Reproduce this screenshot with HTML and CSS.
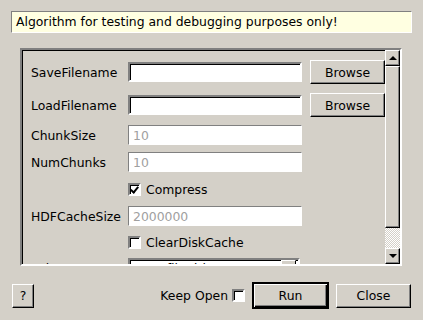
FILE: index.html
```html
<!DOCTYPE html>
<html>
<head>
  <meta charset="UTF-8">
  <title>Algorithm</title>
  <link rel="stylesheet" href="styles.css">
</head>
<body>
  <div class="note">Algorithm for testing and debugging purposes only!</div>

  <div class="panel">
    <div class="view">
      <div class="form">
        <label>SaveFilename</label><input class="field" value=""><button class="btn">Browse</button>
        <label>LoadFilename</label><input class="field" value=""><button class="btn">Browse</button>
        <label>ChunkSize</label><input class="field dim" value="10"><span></span>
        <label>NumChunks</label><input class="field dim" value="10"><span></span>
        <span></span><div class="opt"><span class="box on"></span>Compress</div>
        <label>HDFCacheSize</label><input class="field dim" value="2000000"><span></span>
        <span></span><div class="opt"><span class="box"></span>ClearDiskCache</div>
        <label>Driver</label><div class="combo"><span>sec2 file driver</span><span class="drop"></span></div><span></span>
      </div>
    </div>
    <div class="sbar">
      <div class="arrow up"></div>
      <div class="thumb"></div>
      <div class="trough"></div>
      <div class="arrow down"></div>
    </div>
  </div>

  <div class="bottom">
    <button class="btn help">?</button>
    <span class="grow"></span>
    <span class="keep">Keep Open</span><span class="box"></span>
    <button class="btn run">Run</button>
    <button class="btn">Close</button>
  </div>
</body>
</html>
```

FILE: styles.css
```css
body {margin:0;background:#d4d0c8;font-family:"DejaVu Sans",sans-serif;font-size:12.4px;color:#000;height:320px;overflow:hidden;}
.note {margin:11px 11px 0;height:20px;line-height:20px;padding:0 4px;background:#ffffe1;
  border:1px solid;border-color:#808080 #fff #fff #808080;}

.panel {display:flex;margin:15px 21px 0 20px;height:214px;border:2px solid;border-color:#808080 #fff #fff #808080;
  box-shadow:inset 1px 1px #000;}
.view {flex:1;overflow:hidden;padding:9px 0 0 9px;}
.form {display:grid;grid-template-columns:89px 174px 75px;column-gap:8px;row-gap:7px;
  grid-template-rows:26px 26px 20px 20px 20px 20px 18px 20px;align-items:center;}
.form label {white-space:nowrap;}
.field {box-sizing:border-box;height:20px;width:174px;margin:0;padding:0 3px;font:inherit;background:#fff;
  border:2px solid;border-color:#808080 #fff #fff #808080;box-shadow:inset 1px 1px #000;outline:none;}
.field.dim {color:#a0a0a0;border-width:1px;border-color:#808080 #fff #fff #808080;box-shadow:none;padding:0 4px;}
.opt {grid-column:2 / span 2;display:flex;align-items:center;gap:5px;}
.box {box-sizing:border-box;width:13px;height:13px;background:#fff;border:2px solid;
  border-color:#808080 #fff #fff #808080;box-shadow:inset 1px 1px #000;position:relative;}
.box.on::after {content:"";position:absolute;left:2px;top:0px;width:3px;height:6px;
  border:solid #000;border-width:0 2px 2px 0;transform:rotate(40deg);}
.combo {box-sizing:border-box;height:20px;width:172px;display:flex;align-items:center;justify-content:space-between;
  padding:0 2px 0 4px;background:#fff;border:2px solid;border-color:#808080 #fff #fff #808080;box-shadow:inset 1px 1px #000;}
.drop {width:13px;height:14px;background:#d4d0c8;border:1px solid;border-color:#fff #000 #000 #fff;}

.btn {box-sizing:border-box;height:24px;width:75px;margin:0;padding:0;font:inherit;color:#000;background:#d4d0c8;
  border:1px solid;border-color:#fff #000 #000 #fff;box-shadow:inset -1px -1px #808080;}

.sbar {width:15px;display:flex;flex-direction:column;}
.arrow {height:14px;background:#d4d0c8;border:1px solid;border-color:#fff #000 #000 #fff;box-shadow:inset -1px -1px #808080;
  display:flex;align-items:center;justify-content:center;}
.arrow::after {content:"";border:4px solid transparent;}
.arrow.up::after {border-bottom:4px solid #000;border-top:0;}
.arrow.down::after {border-top:4px solid #000;border-bottom:0;}
.thumb {height:160px;background:#d4d0c8;border:1px solid;border-color:#fff #000 #000 #fff;box-shadow:inset -1px -1px #808080;}
.trough {flex:1;background:repeating-conic-gradient(#fff 0 25%,#d4d0c8 0 50%) 0 0/2px 2px;}

.bottom {display:flex;align-items:center;margin-top:16px;padding:0 12px;}
.bottom .help {width:22px;}
.grow {flex:1;}
.keep {margin-right:4px;}
.bottom .box {margin-right:7px;}
.run {width:77px;height:27px;border:2px solid #000;border-color:#000;
  box-shadow:inset 1px 1px #fff,inset -1px -1px #000,inset -2px -2px #808080;margin-right:7px;}
```
